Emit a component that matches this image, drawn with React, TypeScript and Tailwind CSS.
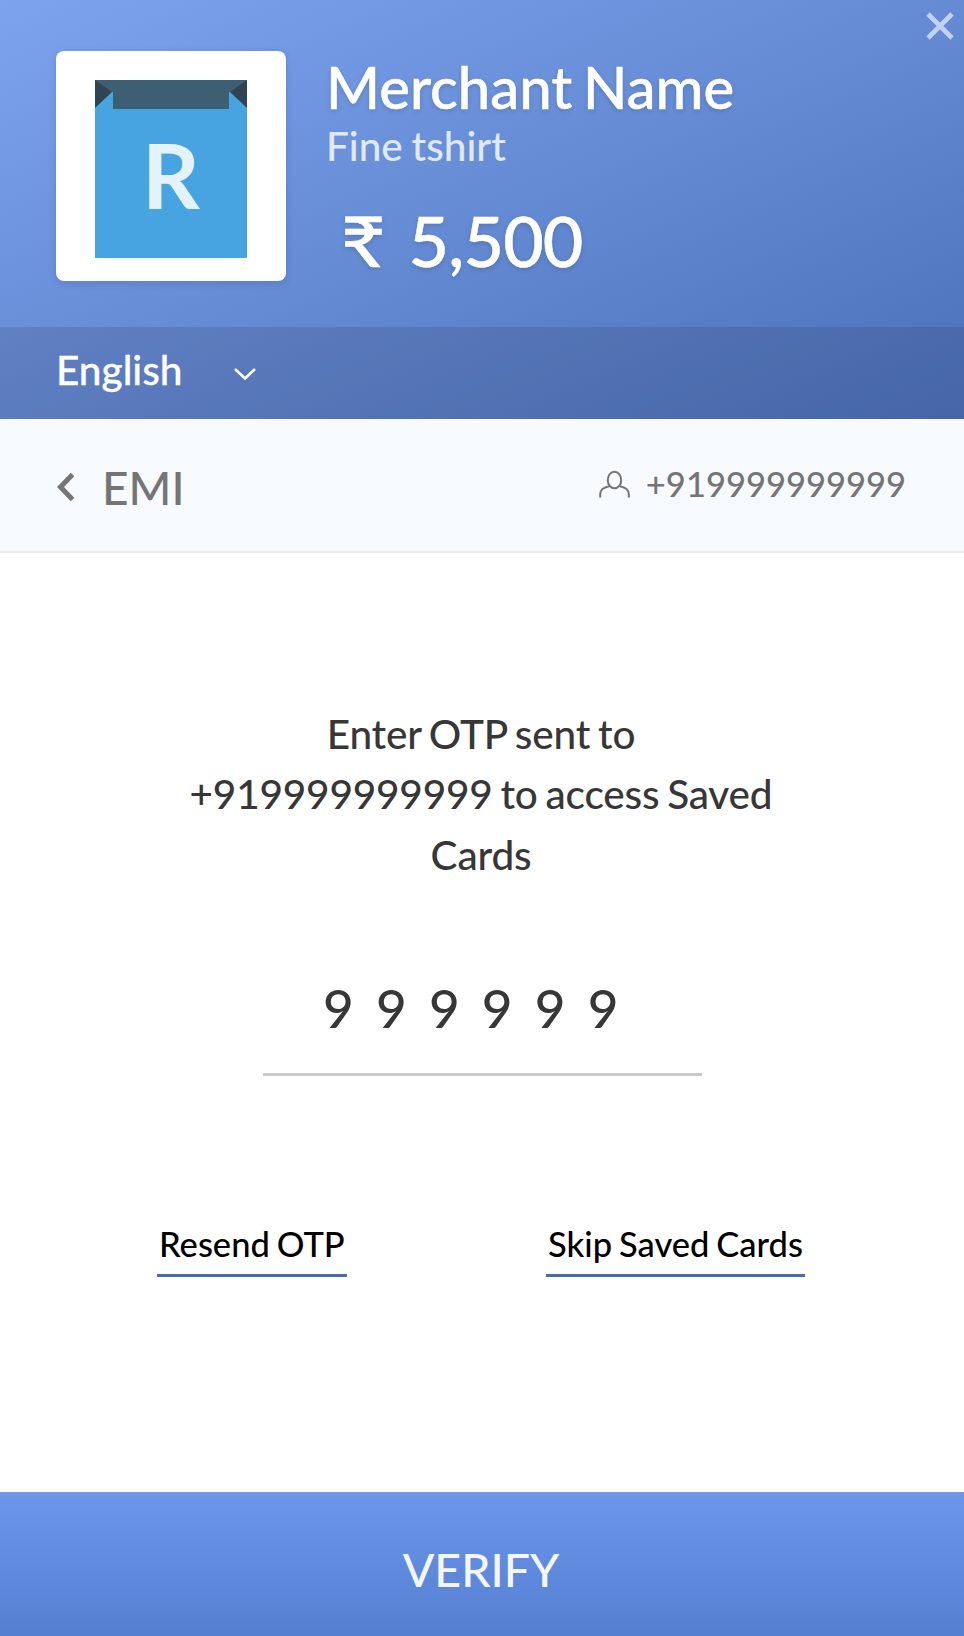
import React from "react";

const MerchantLogo = () => (
  <div className="flex h-[230px] w-[230px] shrink-0 items-center justify-center rounded-lg bg-white shadow-[0_2px_8px_rgba(0,0,0,0.12)]">
    <svg width="152" height="178" viewBox="0 0 152 178" className="mt-1.5">
      <rect width="152" height="178" fill="#48a4e1" />
      <path d="M0 0H152V12L134 12V29H18V12L0 12Z" fill="#3d5f74" />
      <path d="M0 0L17 12L0 28Z" fill="#2f4553" />
      <path d="M152 0L135 12L152 28Z" fill="#2f4553" />
      <text
        x="76"
        y="129"
        textAnchor="middle"
        fontSize="90"
        fontWeight="700"
        fill="#e4f3fb"
      >
        R
      </text>
    </svg>
  </div>
);

const Header = ({
  name,
  description,
  amount,
}: {
  name: string;
  description: string;
  amount: string;
}) => (
  <header className="relative bg-linear-to-br from-[#7da3ee] via-[#658bd5] to-[#4a70ba] text-white">
    <div className="flex h-[327px] pt-[51px] pl-14">
      <MerchantLogo />
      <div className="ml-10 pt-1">
        <h1 className="text-[58px] leading-[64px] font-medium [word-spacing:-4px] [-webkit-text-stroke:0.5px] text-shadow-[0_2px_5px_rgba(0,0,0,0.15)]">
          {name}
        </h1>
        <p className="mt-[3px] text-[40.5px] leading-[48px] font-medium text-white/80 [word-spacing:-1.5px]">
          {description}
        </p>
        <p className="mt-[30px] ml-[15px] flex gap-[28px] text-[70px] leading-[80px] font-medium tracking-[-0.9px] [-webkit-text-stroke:0.5px] text-shadow-[0_2px_5px_rgba(0,0,0,0.15)]">
          <span className="origin-left scale-x-110">₹</span>
          <span>{amount}</span>
        </p>
      </div>
    </div>

    {/* Language picker */}
    <div className="flex h-[92px] items-center bg-[#303a58]/18 pl-14">
      <span className="mb-[7px] text-[40.5px] leading-[48px] font-medium [-webkit-text-stroke:0.3px]">
        English
      </span>
      <svg
        width="24"
        height="16"
        viewBox="0 0 24 16"
        className="mt-0.5 ml-[51px]"
        fill="none"
        stroke="currentColor"
        strokeWidth="2.6"
      >
        <path d="M2 3L12 12.5L22 3" />
      </svg>
    </div>

    <button type="button" className="absolute top-3 right-2.5">
      <svg
        width="28"
        height="28"
        viewBox="0 0 28 28"
        fill="none"
        stroke="#c3d2f2"
        strokeWidth="4.6"
      >
        <path d="M2 2L26 26M26 2L2 26" />
      </svg>
    </button>
  </header>
);

const NavBar = ({ title, phone }: { title: string; phone: string }) => (
  <div className="flex h-[134px] items-center justify-between border-b-2 border-[#ebecf0] bg-[#f7faff] pr-[58px] pl-14 text-[#757575]">
    <button type="button" className="flex items-center">
      <svg
        width="19"
        height="30"
        viewBox="0 0 19 30"
        className="mt-1"
        fill="none"
        stroke="currentColor"
        strokeWidth="5"
      >
        <path d="M16.5 2.5L4.5 15L16.5 27.5" />
      </svg>
      <span className="mt-1.5 ml-[27px] text-[46px] leading-[56px] font-medium">
        {title}
      </span>
    </button>
    <div className="mb-0.5 flex items-center">
      <svg
        width="31"
        height="28"
        viewBox="0 0 31 28"
        fill="none"
        stroke="currentColor"
        strokeWidth="2"
      >
        <ellipse cx="15.5" cy="10" rx="6.7" ry="8.3" />
        <path d="M1.2 27.5V24.5C1.2 17.5 7 17.5 11 15.8M29.8 27.5V24.5C29.8 17.5 24 17.5 20 15.8" />
      </svg>
      <span className="ml-[16px] text-[34.5px] leading-[42px] font-medium">
        {phone}
      </span>
    </div>
  </div>
);

const LinkButton = ({ children }: { children: React.ReactNode }) => (
  <button
    type="button"
    className="border-b-3 border-[#4a69b0] px-0.5 pb-[9px] text-[34.5px] leading-[42px] font-medium text-black [word-spacing:-1.8px]"
  >
    {children}
  </button>
);

const OtpForm = ({ phone, otp }: { phone: string; otp: string }) => (
  <main className="flex flex-1 flex-col items-center pt-[151px] text-[#373737]">
    <p className="mr-0.5 w-[600px] text-center text-[40.5px] leading-[60.4px] font-medium tracking-[-0.18px] [word-spacing:-2.2px]">
      {`Enter OTP sent to ${phone} to access Saved Cards`}
    </p>
    <div className="mt-[91px] h-[100px] w-[439px] border-b-3 border-[#c9c9c9] pl-[60.5px] text-[53px] leading-[64px] font-medium tracking-[22.2px]">
      {otp}
    </div>
    <div className="mt-[147px] flex w-full justify-between pr-[159px] pl-[157px]">
      <LinkButton>Resend OTP</LinkButton>
      <LinkButton>Skip Saved Cards</LinkButton>
    </div>
  </main>
);

export default function App() {
  const phone = "+919999999999";

  return (
    <div className="flex h-[1636px] w-[964px] flex-col overflow-hidden bg-white font-['Lato',sans-serif]">
      <Header name="Merchant Name" description="Fine tshirt" amount="5,500" />
      <NavBar title="EMI" phone={phone} />
      <OtpForm phone={phone} otp="999999" />
      <button
        type="button"
        className="h-36 bg-linear-to-b from-[#6c96ea] to-[#557fd1] pt-[9px] pr-0.5 text-[46.5px] leading-[56px] font-medium text-[#f3f6fc]"
      >
        VERIFY
      </button>
    </div>
  );
}
